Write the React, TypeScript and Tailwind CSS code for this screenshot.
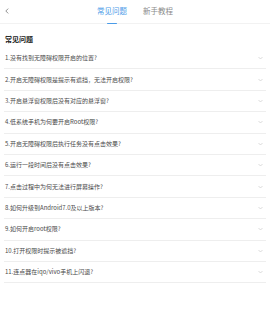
import React from 'react';

const questions = [
  '1.没有找到无障碍权限开启的位置?',
  '2.开启无障碍权限是提示有遮挡，无法开启权限?',
  '3.开启悬浮窗权限后没有对应的悬浮窗?',
  '4.低系统手机为何要开启Root权限?',
  '5.开启无障碍权限后执行任务没有点击效果?',
  '6.运行一段时间后没有点击效果?',
  '7.点击过程中为何无法进行屏幕操作?',
  '8.如何升级到Android7.0及以上版本?',
  '9.如何开启root权限?',
  '10.打开权限时提示被遮挡?',
  '11.连点器在iqo/vivo手机上闪退?',
];

const Chevron: React.FC = () => (
  <svg width="5" height="4" viewBox="0 0 10 6" className="text-[#c8c8c8]">
    <path d="M1 1l4 4 4-4" fill="none" stroke="currentColor" strokeWidth="1.3" />
  </svg>
);

const App: React.FC = () => {
  return (
    <div
      className="w-[270px] h-[324px] bg-white overflow-hidden"
      style={{ fontFamily: '"Noto Sans CJK SC", "Noto Sans", sans-serif' }}
    >
      {/* Header */}
      <header className="h-[24px] flex items-start border-b border-[#f2f2f2]">
        <div className="w-[97px] h-[22px] flex items-center pl-[5px]">
          <svg width="4" height="6" viewBox="0 0 6 10" className="text-[#666]">
            <path d="M5 1L1 5l4 4" fill="none" stroke="currentColor" strokeWidth="1.2" />
          </svg>
        </div>
        <div className="flex items-start gap-[16px] pt-[6px]">
          <div className="flex flex-col items-center">
            <span className="block text-[7.5px] leading-[10px] text-[#4a9be8] whitespace-nowrap">常见问题</span>
            <span className="block mt-[6.5px] w-[10px] h-[1.5px] bg-[#4a9be8] rounded" />
          </div>
          <span className="block text-[7.5px] leading-[10px] text-[#8a8a8a] whitespace-nowrap">新手教程</span>
        </div>
      </header>

      {/* Title */}
      <div className="h-[24px] px-[5px] flex items-center pt-[5px]">
        <h1 className="text-[7px] leading-[10px] font-bold text-[#222]">常见问题</h1>
      </div>

      {/* List */}
      <ul className="px-[4px]">
        {questions.map((q) => (
          <li
            key={q}
            className="h-[21.4px] flex items-center justify-between border-b border-[#eeeeee] pl-[1px] pr-[3px]"
          >
            <span className="text-[6px] leading-[8px] text-[#4a4a4a] whitespace-nowrap">{q}</span>
            <Chevron />
          </li>
        ))}
      </ul>
    </div>
  );
};

export default App;
